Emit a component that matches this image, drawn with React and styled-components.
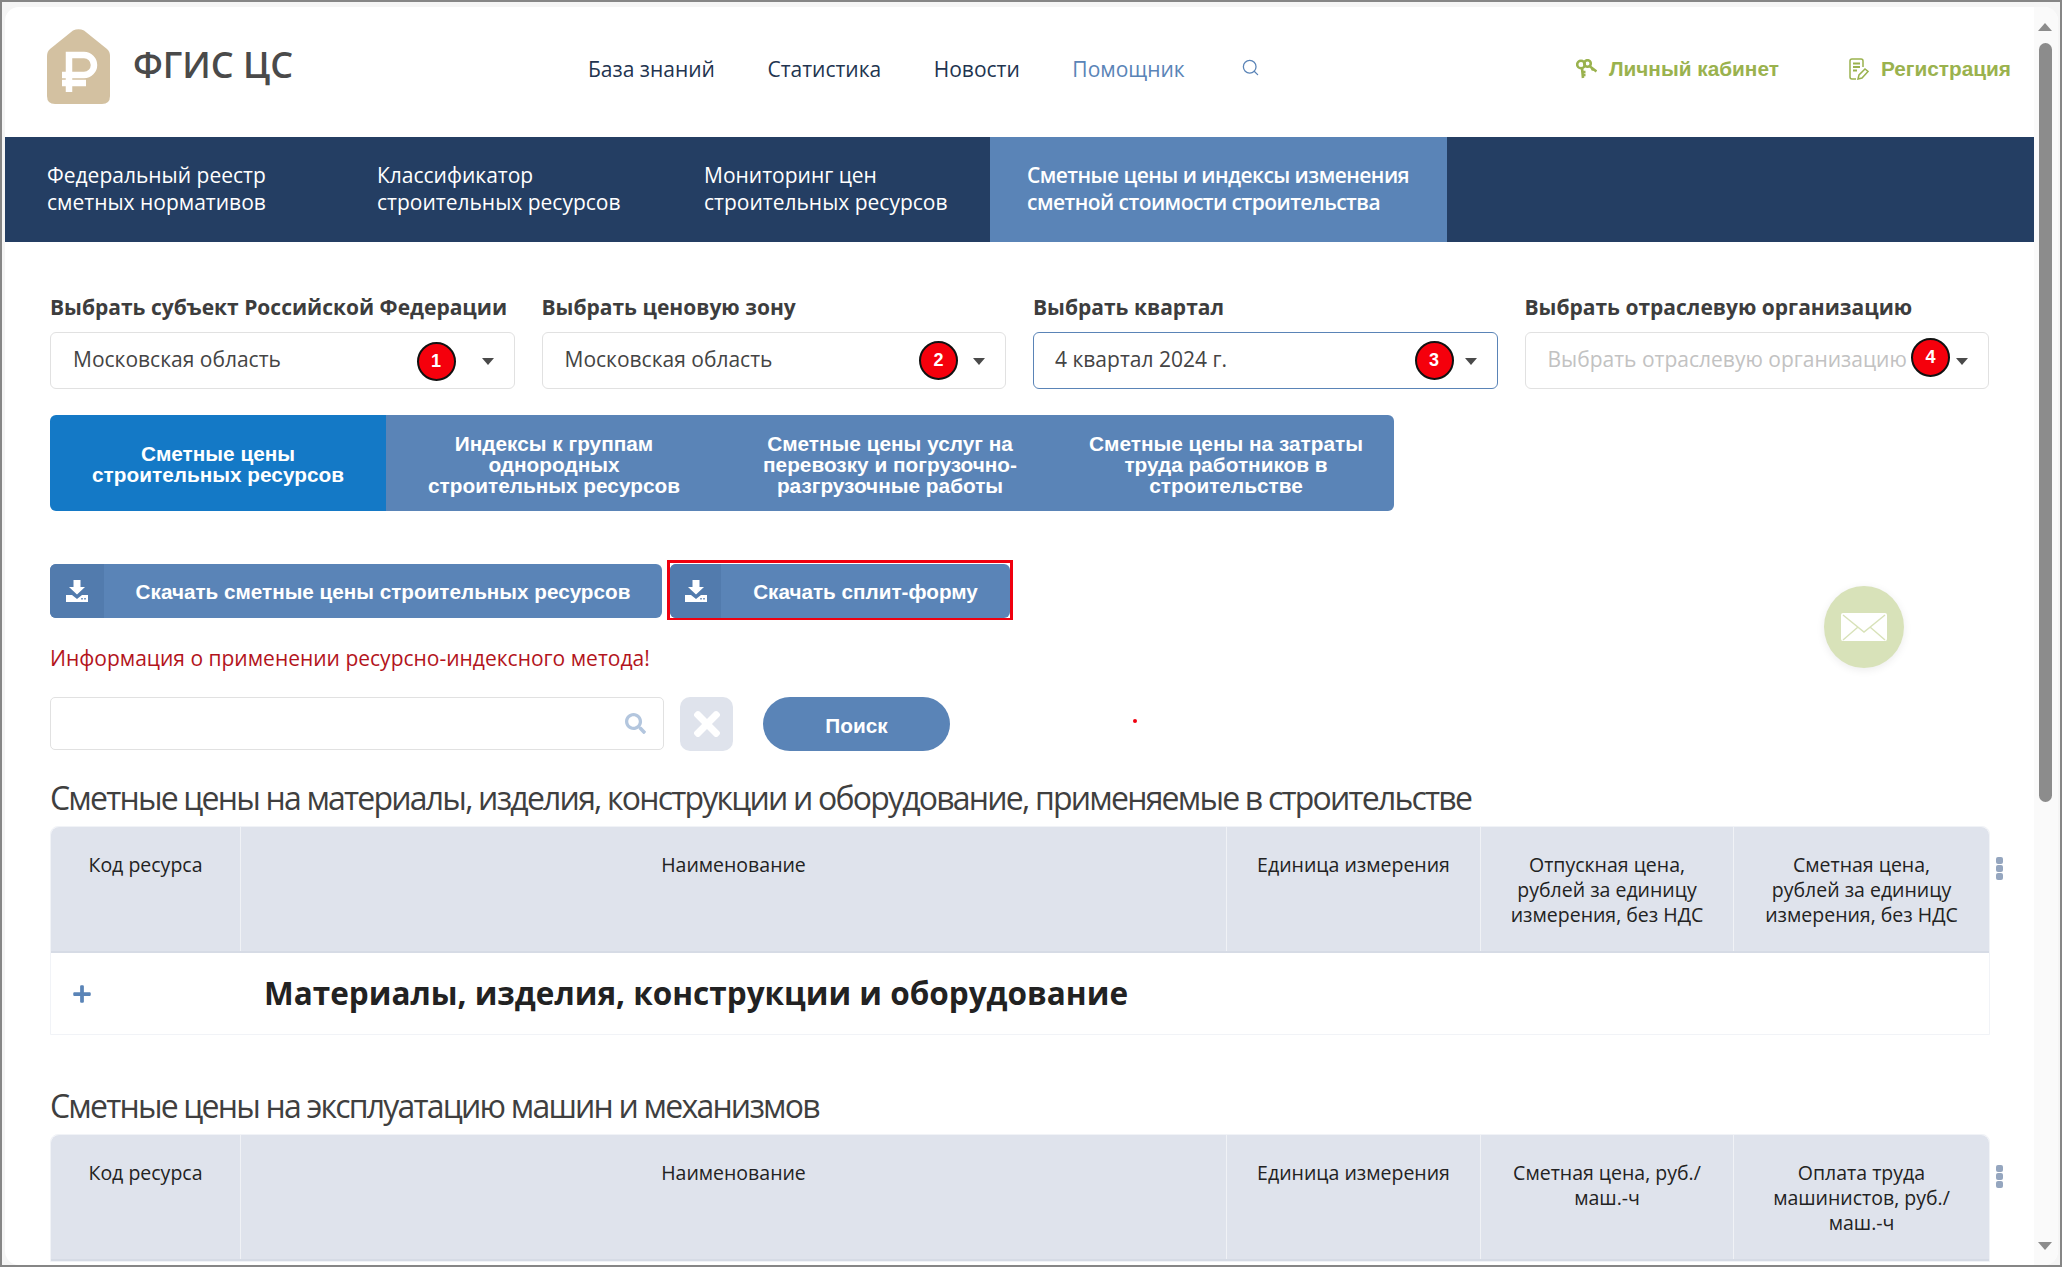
import styled, { createGlobalStyle } from 'styled-components';
import { Search as ThinSearch } from 'lucide-react';
import { FaPlus, FaSearch, FaTimes } from 'react-icons/fa';

const OPEN = '"Open Sans", sans-serif';
const ARIAL = '"Liberation Sans", Arial, sans-serif';
const BLUE = '#5a84b7';
const HEAD_BG = '#dfe3ec';

const GlobalStyle = createGlobalStyle`
  * { box-sizing: border-box; }
  html, body { margin: 0; height: 100%; overflow: hidden; }
  body { font-family: ${OPEN}; color: #444; background: #fff; }
`;

const Frame = styled.div`
  height: 100vh;
  padding: 5px 2px 0 3px;
  border: 2px solid #868686;
  background: #f5f5f5;
  overflow: hidden;
`;

const Card = styled.div`
  display: flex;
  height: 100%;
  border-radius: 14px;
  background: #fff;
  overflow: hidden;
`;

const Main = styled.div`
  flex: 1;
  min-width: 0;
  position: relative;
`;

const Scrollbar = styled.div`
  display: flex;
  flex-direction: column;
  align-items: center;
  width: 24px;
  padding: 16px 2px 0 0;
  background: #fafafa;
`;

const ScrollArrow = styled.div`
  width: 0;
  height: 0;
  border-left: 7.5px solid transparent;
  border-right: 7.5px solid transparent;
  ${(p) => (p.$down
    ? 'border-top: 8px solid #8c8c8c; margin-top: auto; margin-bottom: 15px;'
    : 'border-bottom: 8px solid #8c8c8c;')}
`;

const ScrollThumb = styled.div`
  width: 13px;
  height: 759px;
  margin-top: 12px;
  border-radius: 7px;
  background: #8c8c8c;
`;

const Header = styled.header`
  display: flex;
  align-items: flex-start;
  height: 130px;
  padding: 22px 23px 0 42px;
`;

const Brand = styled.div`
  display: flex;
  gap: 23px;
  width: 541px;
`;

const BrandTitle = styled.div`
  margin-top: 14px;
  font-size: 36px;
  line-height: 44px;
  font-weight: 600;
  color: #4a4a4a;
`;

const TopNav = styled.nav`
  display: flex;
  align-items: center;
  gap: 52.5px;
  margin-top: 25px;
  height: 30px;
`;

const TopLink = styled.a`
  font-size: 21px;
  color: ${(p) => (p.$accent ? BLUE : '#22344f')};
`;

const NavSearch = styled(ThinSearch)`
  margin: -4px 0 0 4px;
`;

const UserLinks = styled.div`
  display: flex;
  align-items: center;
  gap: 70px;
  margin-left: auto;
  margin-top: 28px;
`;

const UserLink = styled.a`
  display: flex;
  align-items: center;
  gap: 12px;
  font-family: ${ARIAL};
  font-size: 20.8px;
  font-weight: 700;
  color: #9ab24e;
`;

const SectionNav = styled.nav`
  display: flex;
  height: 105px;
  background: #243e63;
`;

const SectionItem = styled.a`
  display: flex;
  align-items: center;
  width: ${(p) => p.$width}px;
  padding: 0 0 2px ${(p) => p.$pad}px;
  font-size: 21px;
  line-height: 27px;
  font-weight: ${(p) => (p.$active ? 600 : 400)};
  letter-spacing: ${(p) => (p.$active ? '-0.55px' : '0')};
  color: #fff;
  background: ${(p) => (p.$active ? BLUE : 'transparent')};
`;

const Content = styled.div`
  padding: 51px 44px 0 45px;
`;

const Filters = styled.div`
  display: grid;
  grid-template-columns: repeat(4, 464.5px);
  column-gap: 27px;
`;

const FilterLabel = styled.div`
  margin-bottom: 11px;
  font-size: 21px;
  line-height: 28px;
  font-weight: 700;
  color: #3d3d3d;
  white-space: nowrap;
`;

const Select = styled.div`
  position: relative;
  display: flex;
  align-items: center;
  height: 57px;
  padding: 0 0 3px ${(p) => (p.$focused ? 21 : 22)}px;
  border: 1px solid ${(p) => (p.$focused ? BLUE : '#e1e1e1')};
  border-radius: 6px;
  font-size: 21px;
  white-space: nowrap;
  color: ${(p) => (p.$empty ? '#c2c2c2' : '#444')};
`;

const Caret = styled.span`
  position: absolute;
  right: 20px;
  top: 25px;
  width: 0;
  height: 0;
  border-left: 6px solid transparent;
  border-right: 6px solid transparent;
  border-top: 7px solid #4a4a4a;
`;

const Marker = styled.span`
  position: absolute;
  right: ${(p) => p.$right}px;
  top: ${(p) => p.$top}px;
  display: flex;
  align-items: center;
  justify-content: center;
  width: 39px;
  height: 39px;
  border: 2px solid #111;
  border-radius: 50%;
  font-family: ${ARIAL};
  font-size: 18px;
  font-weight: 700;
  color: #fff;
  background: #f5000c;
`;

const Tabs = styled.div`
  display: flex;
  width: 1344px;
  margin-top: 26px;
  border-radius: 6px;
  overflow: hidden;
`;

const Tab = styled.a`
  display: flex;
  align-items: center;
  justify-content: center;
  width: 336px;
  height: 96px;
  padding: 2px 24px 0;
  font-family: ${ARIAL};
  font-size: 20.8px;
  line-height: 21px;
  font-weight: 700;
  text-align: center;
  color: #fff;
  background: ${(p) => (p.$active ? '#1479c6' : BLUE)};
`;

const Actions = styled.div`
  display: flex;
  gap: 8px;
  margin-top: 53px;
`;

const DownloadButton = styled.a`
  display: flex;
  align-items: center;
  width: ${(p) => p.$width}px;
  height: 54px;
  border-radius: 6px;
  font-family: ${ARIAL};
  font-size: 20.7px;
  font-weight: 700;
  color: #fff;
  background: ${BLUE};
  overflow: hidden;
`;

const HighlightBox = styled.div`
  margin: -4px -3px -2px;
  padding-top: 1px;
  border: 3px solid #f0000f;
  border-bottom-width: 2px;
`;

const DownloadIcon = styled.span`
  display: flex;
  align-items: center;
  justify-content: center;
  flex: none;
  width: ${(p) => p.$width}px;
  height: 100%;
  background: #527bad;
`;

const DownloadLabel = styled.span`
  flex: 1;
  padding-top: 1px;
  text-align: center;
`;

const Notice = styled.div`
  margin-top: 26px;
  font-size: 21px;
  line-height: 28px;
  color: #b3141c;
`;

const SearchRow = styled.div`
  position: relative;
  display: flex;
  align-items: flex-start;
  margin-top: 25px;
`;

const SearchField = styled.div`
  display: flex;
  align-items: center;
  justify-content: flex-end;
  width: 614px;
  height: 53px;
  padding-right: 17px;
  border: 1px solid #e1e1e1;
  border-radius: 5px;
  color: #b3c6de;
  font-size: 21px;
`;

const ClearButton = styled.a`
  display: flex;
  align-items: center;
  justify-content: center;
  width: 53px;
  height: 54px;
  margin-left: 16px;
  border-radius: 10px;
  color: #fff;
  font-size: 38px;
  background: ${HEAD_BG};
`;

const SearchButton = styled.a`
  display: flex;
  align-items: center;
  justify-content: center;
  width: 187px;
  height: 54px;
  margin-left: 30px;
  padding-top: 3px;
  border-radius: 27px;
  font-family: ${ARIAL};
  font-size: 20.8px;
  font-weight: 700;
  color: #fff;
  background: ${BLUE};
`;

const RedDot = styled.span`
  position: absolute;
  left: 1083px;
  top: 22px;
  width: 4px;
  height: 4px;
  border-radius: 50%;
  background: #f0000f;
`;

const SectionTitle = styled.h2`
  margin: ${(p) => p.$top}px 0 ${(p) => p.$bottom}px;
  font-size: 32px;
  line-height: 40px;
  font-weight: 400;
  letter-spacing: -1.8px;
  color: #3f3f3f;
  white-space: nowrap;
`;

const Table = styled.div`
  position: relative;
  border: 1px solid #f1f3f7;
  border-radius: 8px 8px 0 0;
`;

const HeadRow = styled.div`
  display: grid;
  grid-template-columns: 190px 986px 254px 253px 1fr;
  height: 126px;
  border-bottom: 2px solid #d6dbe5;
  border-radius: 8px 8px 0 0;
  background: ${HEAD_BG};
  overflow: hidden;
`;

const HeadCell = styled.div`
  padding: 25px 28px 0;
  border-right: 1px solid #f0f2f6;
  font-size: 19.5px;
  line-height: 25px;
  text-align: center;
  color: #222;

  &:first-child {
    padding: 25px 16px 0;
  }

  &:last-child {
    border-right: 0;
  }
`;

const GroupRow = styled.div`
  display: flex;
  align-items: center;
  height: 81px;
`;

const Expand = styled.span`
  display: flex;
  width: 213px;
  padding-left: 21px;
  color: ${BLUE};
  font-size: 20px;
`;

const GroupTitle = styled.div`
  padding-bottom: 2px;
  font-size: 31.5px;
  font-weight: 700;
  color: #222;
`;

const Kebab = styled.div`
  position: absolute;
  right: -14px;
  top: 30px;
  display: flex;
  flex-direction: column;
  gap: 1px;
`;

const KebabDot = styled.span`
  width: 7px;
  height: 7px;
  border-radius: 2px;
  background: #95a6bf;
`;

const FloatingMail = styled.a`
  position: absolute;
  left: 1819px;
  top: 579px;
  display: flex;
  align-items: center;
  justify-content: center;
  width: 80px;
  height: 82px;
  border-radius: 50%;
  background: #d8e2b9;
  box-shadow: 0 2px 8px rgba(0, 0, 0, 0.08);
`;

function LogoIcon() {
  return (
    <svg width="63" height="75" viewBox="0 0 63 75">
      <path
        d="M26 1.5 Q31.5 -1 37 1.5 L60 20 Q63 22.5 63 27 V67 Q63 75 55 75 H8 Q0 75 0 67 V27 Q0 22.5 3 20 Z"
        fill="#d3c1a1"
      />
      <path d="M22 63 V26 H37 A10 10 0 0 1 37 46 H15 M15 54 H39" fill="none" stroke="#fff" strokeWidth="6.5" />
    </svg>
  );
}

function KeysIcon() {
  return (
    <svg width="21" height="20" viewBox="0 0 21 20" fill="none" stroke="#9ab24e" strokeWidth="2.6">
      <circle cx="5" cy="5.5" r="3.8" />
      <circle cx="11.5" cy="4.5" r="3.3" />
      <path d="M6 9 L7 19 M7 13 H9.5 M7 16 H9.5 M14 7.5 L20.5 12.5 M17 9.5 L16 11.5" />
    </svg>
  );
}

function FormIcon() {
  return (
    <svg width="20" height="22" viewBox="0 0 20 22" fill="none" stroke="#9ab24e" strokeWidth="1.5">
      <path d="M7 21 H3 Q1 21 1 19 V3 Q1 1 3 1 H12 Q14 1 14 3 V9" />
      <path d="M4 5.5 H11 M4 9 H11 M4 12.5 H8" strokeWidth="1.8" />
      <path d="M9 21 L10 17 L16 11 L19 13.5 L13 20 Z" />
    </svg>
  );
}

function DownloadGlyph() {
  return (
    <svg width="22" height="22" viewBox="0 0 22 22" fill="#fff">
      <path d="M7.5 0 H14.5 V7 H19 L11 14.5 L3 7 H7.5 Z" />
      <path d="M0 15 H6 L11 19 L16 15 H22 V22 H0 Z" />
      <rect x="15" y="18" width="2" height="1.5" fill="#7f9ec6" />
      <rect x="18" y="18" width="2" height="1.5" fill="#7f9ec6" />
    </svg>
  );
}

function MailGlyph() {
  return (
    <svg width="46" height="28" viewBox="0 0 46 28">
      <rect width="46" height="28" rx="2" fill="#fff" />
      <path d="M2 2 L23 19 L44 2 M2 27 L17 14 M44 27 L29 14" fill="none" stroke="#d8e2b9" strokeWidth="1.4" />
    </svg>
  );
}

function PriceTable({ columns, group }) {
  return (
    <Table>
      <HeadRow>
        {columns.map((title) => (
          <HeadCell key={title}>{title}</HeadCell>
        ))}
      </HeadRow>
      {group && (
        <GroupRow>
          <Expand>
            <FaPlus />
          </Expand>
          <GroupTitle>{group}</GroupTitle>
        </GroupRow>
      )}
      <Kebab>
        <KebabDot />
        <KebabDot />
        <KebabDot />
      </Kebab>
    </Table>
  );
}

const FILTERS = [
  { label: 'Выбрать субъект Российской Федерации', value: 'Московская область', mark: 1, right: 58, top: 9 },
  { label: 'Выбрать ценовую зону', value: 'Московская область', mark: 2, right: 47, top: 8 },
  { label: 'Выбрать квартал', value: '4 квартал 2024 г.', mark: 3, right: 43, top: 8, focused: true },
  { label: 'Выбрать отраслевую организацию', value: 'Выбрать отраслевую организацию', mark: 4, right: 38, top: 5, empty: true },
];

export default function App() {
  return (
    <>
      <GlobalStyle />
      <Frame>
        <Card>
          <Main>
            <Header>
              <Brand>
                <LogoIcon />
                <BrandTitle>ФГИС ЦС</BrandTitle>
              </Brand>
              <TopNav>
                <TopLink>База знаний</TopLink>
                <TopLink>Статистика</TopLink>
                <TopLink>Новости</TopLink>
                <TopLink $accent>Помощник</TopLink>
                <NavSearch size={19} color={BLUE} strokeWidth={1.6} />
              </TopNav>
              <UserLinks>
                <UserLink>
                  <KeysIcon />
                  Личный кабинет
                </UserLink>
                <UserLink>
                  <FormIcon />
                  Регистрация
                </UserLink>
              </UserLinks>
            </Header>

            <SectionNav>
              <SectionItem $width={372} $pad={42}>
                Федеральный реестр
                <br />
                сметных нормативов
              </SectionItem>
              <SectionItem $width={327} $pad={0}>
                Классификатор
                <br />
                строительных ресурсов
              </SectionItem>
              <SectionItem $width={286} $pad={0}>
                Мониторинг цен
                <br />
                строительных ресурсов
              </SectionItem>
              <SectionItem $width={457} $pad={37} $active>
                Сметные цены и индексы изменения
                <br />
                сметной стоимости строительства
              </SectionItem>
            </SectionNav>

            <Content>
              <Filters>
                {FILTERS.map((f) => (
                  <div key={f.mark}>
                    <FilterLabel>{f.label}</FilterLabel>
                    <Select $focused={f.focused} $empty={f.empty}>
                      {f.value}
                      <Marker $right={f.right} $top={f.top}>
                        {f.mark}
                      </Marker>
                      <Caret />
                    </Select>
                  </div>
                ))}
              </Filters>

              <Tabs>
                <Tab $active>
                  Сметные цены
                  <br />
                  строительных ресурсов
                </Tab>
                <Tab>
                  Индексы к группам
                  <br />
                  однородных
                  <br />
                  строительных ресурсов
                </Tab>
                <Tab>Сметные цены услуг на перевозку и погрузочно-разгрузочные работы</Tab>
                <Tab>Сметные цены на затраты труда работников в строительстве</Tab>
              </Tabs>

              <Actions>
                <DownloadButton $width={612}>
                  <DownloadIcon $width={54}>
                    <DownloadGlyph />
                  </DownloadIcon>
                  <DownloadLabel>Скачать сметные цены строительных ресурсов</DownloadLabel>
                </DownloadButton>
                <HighlightBox>
                  <DownloadButton $width={340}>
                    <DownloadIcon $width={51}>
                      <DownloadGlyph />
                    </DownloadIcon>
                    <DownloadLabel>Скачать сплит-форму</DownloadLabel>
                  </DownloadButton>
                </HighlightBox>
              </Actions>

              <Notice>Информация о применении ресурсно-индексного метода!</Notice>

              <SearchRow>
                <SearchField>
                  <FaSearch />
                </SearchField>
                <ClearButton>
                  <FaTimes />
                </ClearButton>
                <SearchButton>Поиск</SearchButton>
                <RedDot />
              </SearchRow>

              <SectionTitle $top={27} $bottom={8}>
                Сметные цены на материалы, изделия, конструкции и оборудование, применяемые в строительстве
              </SectionTitle>
              <PriceTable
                columns={[
                  'Код ресурса',
                  'Наименование',
                  'Единица измерения',
                  'Отпускная цена, рублей за единицу измерения, без НДС',
                  'Сметная цена, рублей за единицу измерения, без НДС',
                ]}
                group="Материалы, изделия, конструкции и оборудование"
              />

              <SectionTitle $top={51} $bottom={8}>
                Сметные цены на эксплуатацию машин и механизмов
              </SectionTitle>
              <PriceTable
                columns={[
                  'Код ресурса',
                  'Наименование',
                  'Единица измерения',
                  'Сметная цена, руб./маш.-ч',
                  'Оплата труда машинистов, руб./маш.-ч',
                ]}
              />
            </Content>

            <FloatingMail>
              <MailGlyph />
            </FloatingMail>
          </Main>
          <Scrollbar>
            <ScrollArrow />
            <ScrollThumb />
            <ScrollArrow $down />
          </Scrollbar>
        </Card>
      </Frame>
    </>
  );
}
